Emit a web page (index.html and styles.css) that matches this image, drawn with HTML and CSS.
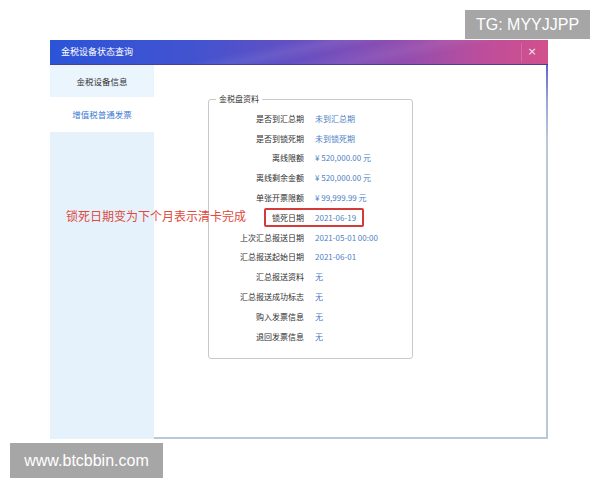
FILE: index.html
```html
<!DOCTYPE html>
<html lang="zh-CN">
<head>
<meta charset="utf-8">
<title>金税设备状态查询</title>
<link rel="stylesheet" href="styles.css">
</head>
<body>
<div class="stage">
  <div class="window">
    <div class="titlebar">
      <span class="title">金税设备状态查询</span>
      <span class="close-sep"></span>
      <span class="close">×</span>
    </div>
    <div class="win-body">
      <div class="sidebar">
        <div class="nav-item nav-first">金税设备信息</div>
        <div class="nav-item nav-active">增值税普通发票</div>
      </div>
      <div class="main">
        <fieldset class="group">
          <legend>金税盘资料</legend>
          <div class="row"><span class="lbl">是否到汇总期</span><span class="val">未到汇总期</span></div>
          <div class="row"><span class="lbl">是否到锁死期</span><span class="val">未到锁死期</span></div>
          <div class="row"><span class="lbl">离线限额</span><span class="val">¥ 520,000.00 元</span></div>
          <div class="row"><span class="lbl">离线剩余金额</span><span class="val">¥ 520,000.00 元</span></div>
          <div class="row"><span class="lbl">单张开票限额</span><span class="val">¥ 99,999.99 元</span></div>
          <div class="row row-mark"><span class="lbl">锁死日期</span><span class="val">2021-06-19</span><span class="mark"></span></div>
          <div class="row"><span class="lbl">上次汇总报送日期</span><span class="val">2021-05-01 00:00</span></div>
          <div class="row"><span class="lbl">汇总报送起始日期</span><span class="val">2021-06-01</span></div>
          <div class="row"><span class="lbl">汇总报送资料</span><span class="val">无</span></div>
          <div class="row"><span class="lbl">汇总报送成功标志</span><span class="val">无</span></div>
          <div class="row"><span class="lbl">购入发票信息</span><span class="val">无</span></div>
          <div class="row"><span class="lbl">退回发票信息</span><span class="val">无</span></div>
        </fieldset>
      </div>
    </div>
  </div>
  <div class="note">锁死日期变为下个月表示清卡完成</div>
  <div class="wm wm-top">TG: MYYJJPP</div>
  <div class="wm wm-bottom">www.btcbbin.com</div>
</div>
</body>
</html>
```

FILE: styles.css
```css
html, body {
  margin: 0;
  padding: 0;
  background: #ffffff;
}
body {
  font-family: "Noto Sans CJK SC", "Liberation Sans", sans-serif;
}
.stage {
  position: relative;
  width: 600px;
  height: 480px;
  overflow: hidden;
  padding: 40px 0 0 50px;
  box-sizing: border-box;
}
.window {
  width: 498px;
  display: flex;
  flex-direction: column;
}
.titlebar {
  height: 25px;
  display: flex;
  align-items: center;
  padding-left: 11px;
  box-sizing: border-box;
  background:
    linear-gradient(168deg, rgba(255,255,255,0) 40%, rgba(255,255,255,0.07) 48%, rgba(255,255,255,0) 56%, rgba(255,255,255,0.06) 66%, rgba(255,255,255,0) 74%),
    linear-gradient(90deg, #2b54d8 0%, #4453cf 30%, #6a4ec0 52%, #944dae 72%, #bf4e9a 88%, #d2508c 100%);
  border-bottom: 1px solid #4a3e9a;
}
.title {
  color: #ffffff;
  font-size: 9px;
  line-height: 12px;
  flex: 1;
}
.close-sep {
  width: 1px;
  height: 19px;
  background: rgba(255,255,255,0.16);
}
.close {
  width: 20px;
  margin-right: 6px;
  color: #f6e6f0;
  font-family: "DejaVu Sans", sans-serif;
  font-size: 11px;
  line-height: 12px;
  text-align: center;
}
.win-body {
  display: flex;
  height: 374px;
}
.sidebar {
  width: 104px;
  background: #e5f2fc;
  display: flex;
  flex-direction: column;
}
.nav-item {
  font-size: 8.5px;
  text-align: center;
  color: #333333;
}
.nav-first {
  height: 32px;
  line-height: 32px;
  background: #ebf5fd;
}
.nav-active {
  height: 35px;
  line-height: 35px;
  background: #ffffff;
  color: #3b7ad3;
}
.main {
  flex: 1;
  background: #ffffff;
  border-right: 2px solid #b9c7d9;
  border-bottom: 2px solid #b9c7d9;
  border-image: linear-gradient(180deg, #5a62c8 0%, #98a8d8 10%, #b9c7d9 20%) 1;
  padding: 29px 0 0 54px;
}
.group {
  margin: 0;
  width: 205px;
  height: 265px;
  box-sizing: border-box;
  padding: 5px 0 0 0;
  border: 1px solid #c9c9c9;
  border-radius: 3px;
}
.group legend {
  font-size: 8px;
  line-height: 10px;
  color: #333333;
  margin-left: 7px;
  padding: 0 3px;
}
.row {
  position: relative;
  height: 19.8px;
  display: grid;
  grid-template-columns: 95px 1fr;
  column-gap: 11px;
  align-items: center;
  font-size: 8px;
  line-height: 10px;
}
.lbl {
  text-align: right;
  color: #2e2e2e;
}
.val {
  color: #4d7fc4;
}
.mark {
  position: absolute;
  left: 55px;
  width: 100px;
  top: 0;
  height: 19.5px;
  box-sizing: border-box;
  border: 2px solid #d33a3a;
  border-radius: 2px;
}
.note {
  position: absolute;
  left: 66px;
  top: 208px;
  font-size: 12px;
  line-height: 16px;
  color: #df4a3c;
}
.wm {
  position: absolute;
  background: #a6a6a6;
  color: #ffffff;
  font-family: "Liberation Sans", Arial, sans-serif;
  font-size: 16px;
  display: flex;
  align-items: center;
  justify-content: center;
}
.wm-top {
  left: 465px;
  top: 10px;
  width: 125px;
  height: 29px;
}
.wm-bottom {
  left: 10px;
  top: 443px;
  width: 153px;
  height: 35px;
}
```
